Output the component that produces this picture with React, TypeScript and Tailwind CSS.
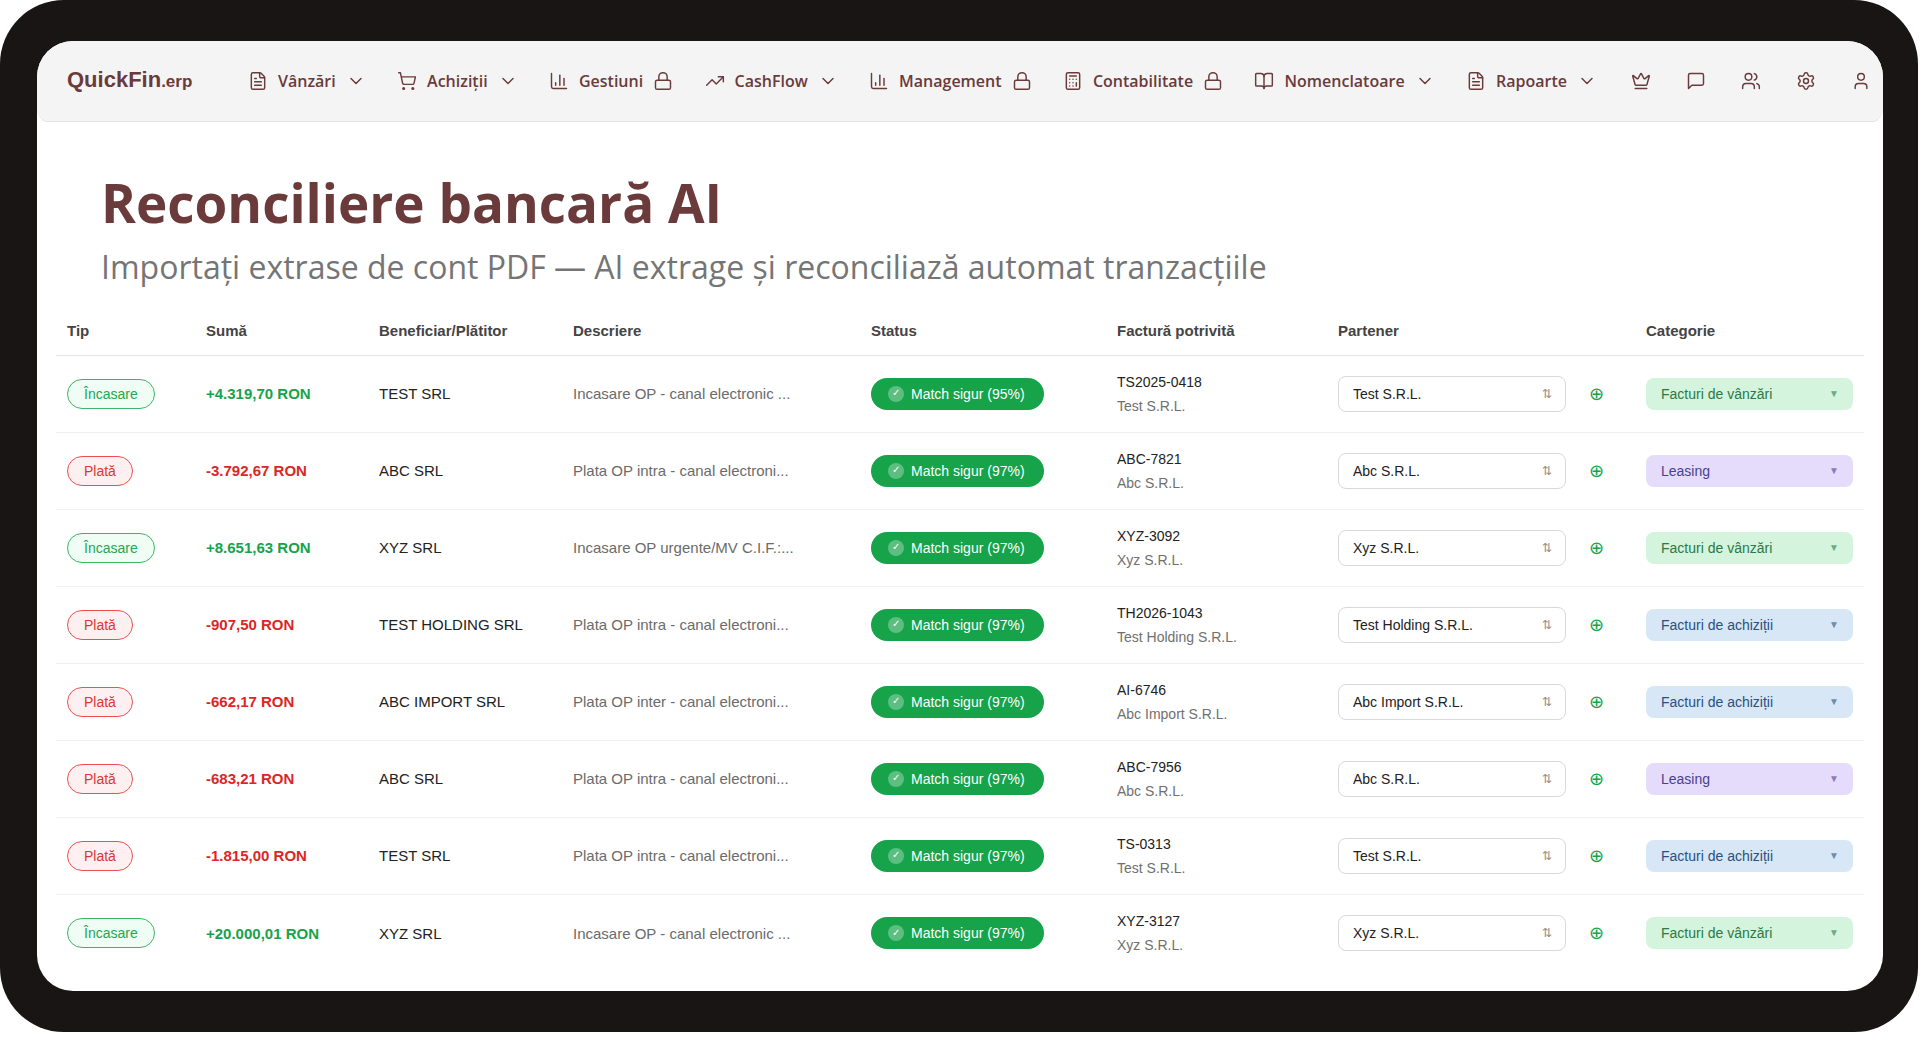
import type { ComponentType, ReactNode } from "react";
import {
  BookOpen,
  Calculator,
  ChartColumn,
  ChevronDown,
  Crown,
  FileText,
  Lock,
  Settings,
  ShoppingCart,
  TrendingUp,
  User,
  Users,
} from "lucide-react";

type IconProps = { size?: number; strokeWidth?: number; className?: string };
type Icon = ComponentType<IconProps>;

function Message({ size = 20, strokeWidth = 2 }: IconProps) {
  return (
    <svg
      width={size}
      height={size}
      viewBox="0 0 24 24"
      fill="none"
      stroke="currentColor"
      strokeWidth={strokeWidth}
      strokeLinecap="round"
      strokeLinejoin="round"
    >
      <path d="M21 15a2 2 0 0 1-2 2H7l-4 4V5a2 2 0 0 1 2-2h14a2 2 0 0 1 2 2z" />
    </svg>
  );
}

const menu: { label: string; icon: Icon; locked?: boolean }[] = [
  { label: "Vânzări", icon: FileText },
  { label: "Achiziții", icon: ShoppingCart },
  { label: "Gestiuni", icon: ChartColumn, locked: true },
  { label: "CashFlow", icon: TrendingUp },
  { label: "Management", icon: ChartColumn, locked: true },
  { label: "Contabilitate", icon: Calculator, locked: true },
  { label: "Nomenclatoare", icon: BookOpen },
  { label: "Rapoarte", icon: FileText },
];

const tools: { label: string; icon: Icon }[] = [
  { label: "Abonament", icon: Crown },
  { label: "Mesaje", icon: Message },
  { label: "Utilizatori", icon: Users },
  { label: "Setări", icon: Settings },
  { label: "Cont", icon: User },
];

type Category = "Facturi de vânzări" | "Facturi de achiziții" | "Leasing";

const categoryStyle: Record<Category, string> = {
  "Facturi de vânzări": "bg-[#d4f4dd] text-[#2a7a45]",
  "Facturi de achiziții": "bg-[#d7e7f6] text-[#2b5080]",
  Leasing: "bg-[#e5dbfa] text-[#4a3f8f]",
};

type Row = {
  income?: boolean;
  amount: string;
  payer: string;
  description: string;
  match: number;
  invoice: string;
  partner: string;
  category: Category;
};

const rows: Row[] = [
  { income: true, amount: "+4.319,70 RON", payer: "TEST SRL", description: "Incasare OP - canal electronic ...", match: 95, invoice: "TS2025-0418", partner: "Test S.R.L.", category: "Facturi de vânzări" },
  { amount: "-3.792,67 RON", payer: "ABC SRL", description: "Plata OP intra - canal electroni...", match: 97, invoice: "ABC-7821", partner: "Abc S.R.L.", category: "Leasing" },
  { income: true, amount: "+8.651,63 RON", payer: "XYZ SRL", description: "Incasare OP urgente/MV C.I.F.:...", match: 97, invoice: "XYZ-3092", partner: "Xyz S.R.L.", category: "Facturi de vânzări" },
  { amount: "-907,50 RON", payer: "TEST HOLDING SRL", description: "Plata OP intra - canal electroni...", match: 97, invoice: "TH2026-1043", partner: "Test Holding S.R.L.", category: "Facturi de achiziții" },
  { amount: "-662,17 RON", payer: "ABC IMPORT SRL", description: "Plata OP inter - canal electroni...", match: 97, invoice: "AI-6746", partner: "Abc Import S.R.L.", category: "Facturi de achiziții" },
  { amount: "-683,21 RON", payer: "ABC SRL", description: "Plata OP intra - canal electroni...", match: 97, invoice: "ABC-7956", partner: "Abc S.R.L.", category: "Leasing" },
  { amount: "-1.815,00 RON", payer: "TEST SRL", description: "Plata OP intra - canal electroni...", match: 97, invoice: "TS-0313", partner: "Test S.R.L.", category: "Facturi de achiziții" },
  { income: true, amount: "+20.000,01 RON", payer: "XYZ SRL", description: "Incasare OP - canal electronic ...", match: 97, invoice: "XYZ-3127", partner: "Xyz S.R.L.", category: "Facturi de vânzări" },
];

const partners = Array.from(new Set(rows.map((r) => r.partner)));
const categories = Object.keys(categoryStyle) as Category[];

function TopBar() {
  return (
    <header className="flex h-[81px] items-center border-b border-[#e4e4e4] bg-[#f4f4f4] pr-3 pl-[30px] text-[#6b3a3a] [border-bottom-left-radius:10px_16px] [border-bottom-right-radius:10px_16px]">
      <a href="#" className="w-[181px] shrink-0 font-['Liberation_Sans',sans-serif] text-[22px] leading-7 font-bold">
        QuickFin<span className="text-[17px]">.erp</span>
      </a>
      <nav className="flex flex-1 items-center justify-between">
        {menu.map(({ label, icon: ItemIcon, locked }) => (
          <button key={label} type="button" className="flex items-center gap-[10px] text-base font-semibold">
            <ItemIcon size={20} strokeWidth={1.75} />
            {label}
            {locked ? <Lock size={20} strokeWidth={1.75} /> : <ChevronDown size={20} strokeWidth={1.75} />}
          </button>
        ))}
      </nav>
      <div className="ml-[34px] flex items-center gap-[35px]">
        {tools.map(({ label, icon: ToolIcon }) => (
          <button key={label} type="button" aria-label={label}>
            <ToolIcon size={20} strokeWidth={1.75} />
          </button>
        ))}
      </div>
    </header>
  );
}

function Th({ children }: { children?: ReactNode }) {
  return <th className="h-12 px-[11px] text-left font-bold text-[#444444]">{children}</th>;
}

function Td({ children, className = "" }: { children: ReactNode; className?: string }) {
  return <td className={`px-[11px] whitespace-nowrap ${className}`}>{children}</td>;
}

function TransactionRow({ row }: { row: Row }) {
  return (
    <tr className="h-[77px] border-b border-[#f0f0f0] last:border-b-0">
      <Td>
        <span
          className={`inline-flex h-[30px] items-center rounded-full border px-4 text-sm ${
            row.income ? "border-[#3cb569] bg-[#f0fdf4] text-[#22a852]" : "border-[#ec5050] bg-[#fef0f0] text-[#df3535]"
          }`}
        >
          {row.income ? "Încasare" : "Plată"}
        </span>
      </Td>
      <Td className={`pt-[2px] font-bold ${row.income ? "text-[#16a34a]" : "text-[#dc2626]"}`}>{row.amount}</Td>
      <Td className="pt-[2px] text-[#222222]">{row.payer}</Td>
      <Td className="pt-[2px] text-[#6b6b6b]">{row.description}</Td>
      <Td>
        <span className="inline-flex h-8 items-center gap-[7px] rounded-full bg-[#16a34a] pr-[19px] pl-[17px] text-sm text-white">
          <span className="flex size-4 items-center justify-center rounded-full bg-white/30 text-[10px]">✓</span>
          Match sigur ({row.match}%)
        </span>
      </Td>
      <Td className="text-sm leading-6">
        <div className="text-[#222222]">{row.invoice}</div>
        <div className="text-[#707070]">{row.partner}</div>
      </Td>
      <Td>
        <div className="flex items-center gap-[22px]">
          <div className="relative flex-1">
            <select
              aria-label={`Partener pentru ${row.invoice}`}
              defaultValue={row.partner}
              className="block h-9 w-full appearance-none rounded-lg border border-[#d9d9d9] bg-white pr-8 pl-[14px] text-sm text-[#222222]"
            >
              {partners.map((p) => (
                <option key={p}>{p}</option>
              ))}
            </select>
            <span className="pointer-events-none absolute inset-y-0 right-[14px] flex items-center text-xs text-[#8c8c8c]">⇅</span>
          </div>
          <button type="button" aria-label="Adaugă partener" className="mr-5 w-4 text-lg leading-5 text-[#16a34a]">
            ⊕
          </button>
        </div>
      </Td>
      <Td>
        <div className={`relative rounded-lg ${categoryStyle[row.category]}`}>
          <select
            aria-label={`Categorie pentru ${row.invoice}`}
            defaultValue={row.category}
            className="block h-8 w-full appearance-none bg-transparent pr-8 pl-[15px] text-sm"
          >
            {categories.map((c) => (
              <option key={c}>{c}</option>
            ))}
          </select>
          <span className="pointer-events-none absolute inset-y-0 right-[14px] flex items-center text-[10px] opacity-60">▼</span>
        </div>
      </Td>
    </tr>
  );
}

export default function App() {
  return (
    <div className="min-h-screen bg-white pr-[2px] font-['Open_Sans',sans-serif]">
      <div className="rounded-[64px] bg-[#191514] py-[41px] pr-[35px] pl-[37px]">
        <div className="overflow-hidden rounded-[36px] bg-white pb-5">
          <TopBar />
          <main>
            <div className="px-16 pt-[49px] pb-[18px]">
              <h1 className="text-[53px] leading-[64px] font-bold text-[#6b3a3a]">Reconciliere bancară AI</h1>
              <p className="mt-[10px] text-[32px] leading-[44px] text-[#757575]">
                Importați extrase de cont PDF — AI extrage și reconciliază automat tranzacțiile
              </p>
            </div>
            <div className="px-[19px]">
              <table className="w-full table-fixed border-collapse font-['Liberation_Sans',sans-serif] text-[15px]">
                <colgroup>
                  <col className="w-[139px]" />
                  <col className="w-[173px]" />
                  <col className="w-[194px]" />
                  <col className="w-[298px]" />
                  <col className="w-[246px]" />
                  <col className="w-[221px]" />
                  <col className="w-[308px]" />
                  <col className="w-[229px]" />
                </colgroup>
                <thead>
                  <tr className="border-b border-[#e5e5e5]">
                    <Th>Tip</Th>
                    <Th>Sumă</Th>
                    <Th>Beneficiar/Plătitor</Th>
                    <Th>Descriere</Th>
                    <Th>Status</Th>
                    <Th>Factură potrivită</Th>
                    <Th>Partener</Th>
                    <Th>Categorie</Th>
                  </tr>
                </thead>
                <tbody>
                  {rows.map((row) => (
                    <TransactionRow key={row.invoice} row={row} />
                  ))}
                </tbody>
              </table>
            </div>
          </main>
        </div>
      </div>
    </div>
  );
}
